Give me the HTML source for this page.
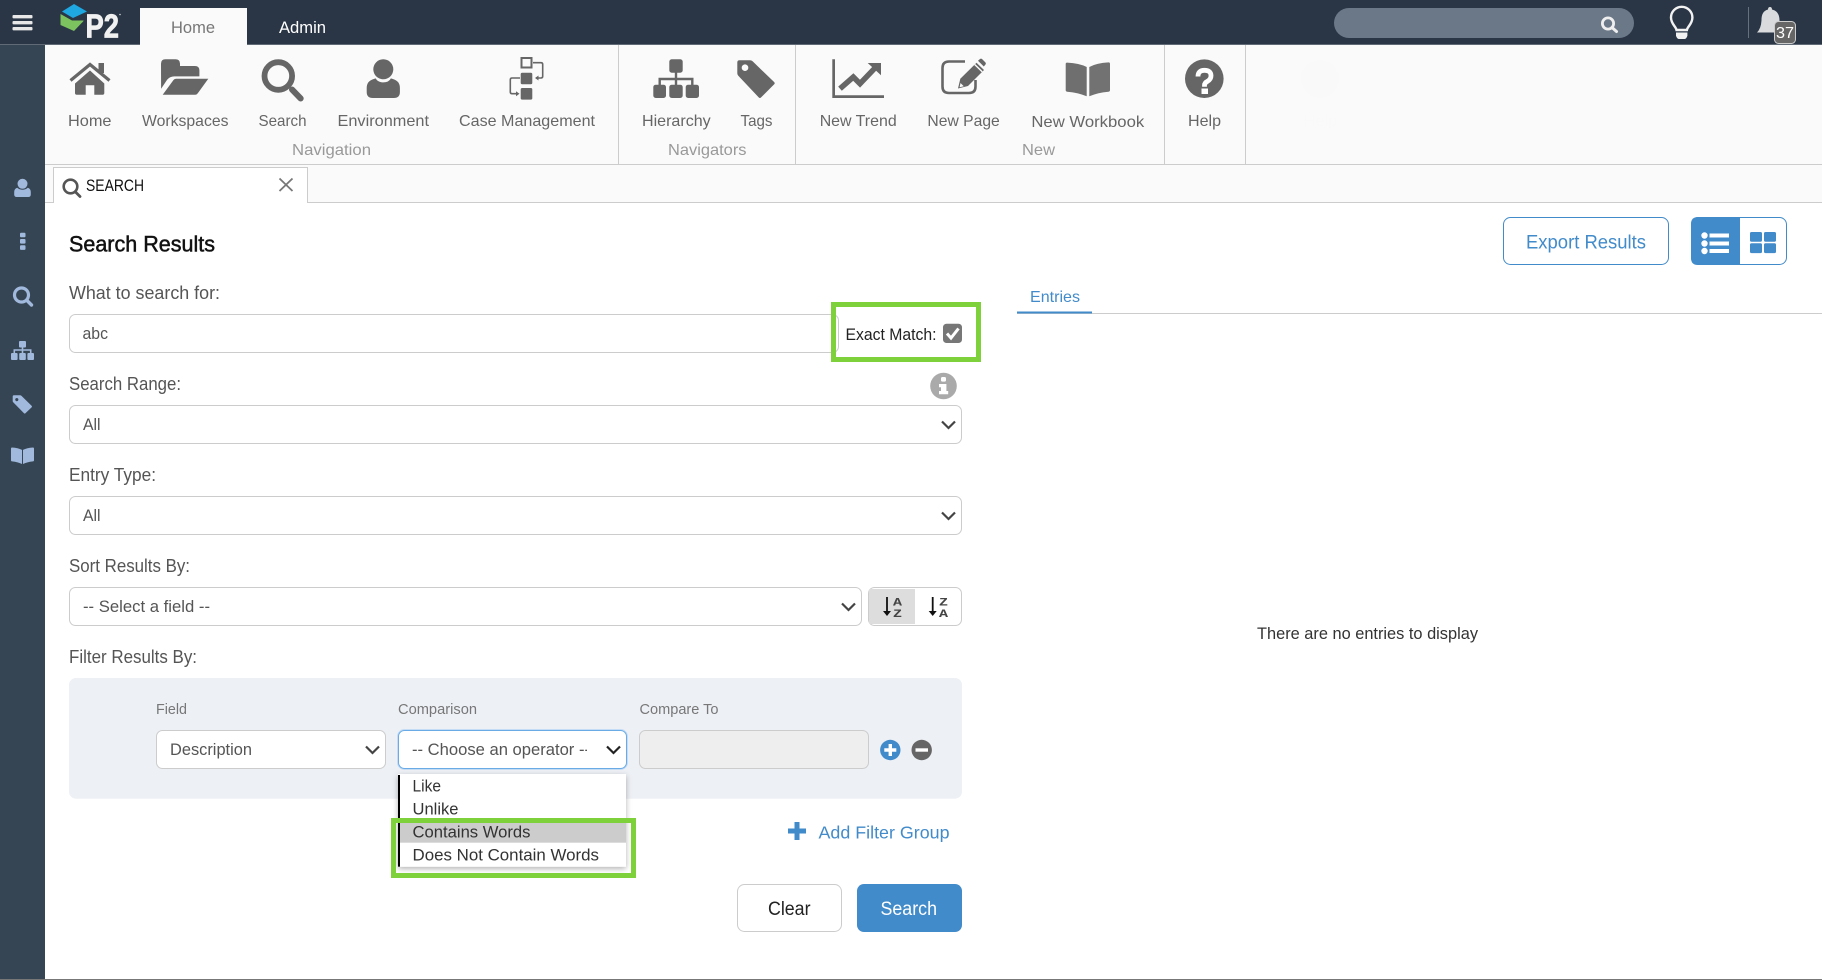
<!DOCTYPE html>
<html lang="en">
<head>
<meta charset="utf-8">
<title>P2 Search Results</title>
<style>
html,body{margin:0;padding:0;background:#fff;width:1822px;height:980px;overflow:hidden}
svg{display:block}
text{font-family:"Liberation Sans",sans-serif;white-space:pre}
.rb{font-size:16px;fill:#666}
.gp{font-size:16px;fill:#999}
.lb{font-size:18px;fill:#555}
.ip{font-size:16.5px;fill:#555}
.sm{font-size:15px;fill:#777}
.op{font-size:16.5px;fill:#333}
.box{fill:#fff;stroke:#ccc;stroke-width:1}
.chev{fill:none;stroke:#444;stroke-width:2.2}
.sd{fill:#a0b9dd}
.ic{fill:#666}
</style>
</head>
<body>
<svg xmlns="http://www.w3.org/2000/svg" width="1822" height="980" viewBox="0 0 1822 980">
<defs>
<filter id="sh" x="-10%" y="-10%" width="120%" height="125%"><feDropShadow dx="0" dy="2" stdDeviation="3" flood-color="#000" flood-opacity=".3"/></filter>
<clipPath id="opc"><rect x="405" y="735" width="182" height="30"/></clipPath>
</defs>

<!-- page -->
<rect width="1822" height="980" fill="#fff"/>
<rect x="0" y="979" width="1822" height="1" fill="#777"/>

<!-- top bar -->
<rect width="1822" height="44" fill="#2a3646"/>
<rect y="44" width="1822" height="1" fill="#5f6a76"/>
<rect x="0" y="45" width="45" height="934" fill="#364553"/>

<!-- hamburger -->
<g fill="#e8e8e8"><rect x="12.5" y="15" width="20" height="3.4" rx="1"/><rect x="12.5" y="21" width="20" height="3.4" rx="1"/><rect x="12.5" y="27" width="20" height="3.4" rx="1"/></g>

<!-- logo -->
<path d="M74 4 L87 11.5 L73 18 L62 11.5 Z" fill="#1ea7e1"/>
<path d="M60.5 14 L72 20.5 L84 20.5 L74 31 L60.5 25 Z" fill="#7cc25e"/>
<path d="M77 16.5 L87 12.5 L87 23 Z" fill="#2a3646"/>
<text x="85.5" y="37.5" style="font-size:33px;font-weight:bold;fill:#f1f1f1;stroke:#f1f1f1;stroke-width:.8" textLength="33.5" lengthAdjust="spacingAndGlyphs">P2</text>
<circle cx="120" cy="14.5" r=".8" fill="#cfd3d8"/>

<!-- main tabs -->
<rect x="140" y="8" width="107" height="37" fill="#fafafa"/>
<text x="171" y="33" style="font-size:17px;fill:#777" textLength="44" lengthAdjust="spacingAndGlyphs">Home</text>
<text x="279" y="33" style="font-size:17px;fill:#fff" textLength="47" lengthAdjust="spacingAndGlyphs">Admin</text>

<!-- top right -->
<rect x="1334" y="8" width="300" height="30" rx="15" fill="#6b7888"/>
<circle cx="1608" cy="23.5" r="5.6" fill="none" stroke="#eee" stroke-width="2.8"/>
<line x1="1612" y1="27.5" x2="1616.5" y2="31.5" stroke="#eee" stroke-width="3" stroke-linecap="round"/>
<path d="M1676.5 30 c-.5-3.5-5.5-6-5.5-12.5 a10.7 10.7 0 0 1 21.4 0 c0 6.5-5 9-5.5 12.5 z" fill="none" stroke="#f2f2f2" stroke-width="2.4"/>
<path d="M1676 32.5 h11.4 v3.2 q-1 3.3-3 3.3 h-5.4 q-2 0-3-3.3 z" fill="#f2f2f2"/>
<rect x="1748" y="7" width="1" height="31" fill="#66717e"/>
<path d="M1770 7 q2 0 2 2.5 c6 1.5 7.5 6 7.5 11 v4 l3 8 H1757 q4-4 4.5-12 c0-6 1.5-9.5 6.5-11 q0-2.5 2-2.5z" fill="#d9dbdd"/>
<rect x="1774.5" y="21.5" width="21" height="22" rx="4" fill="#666" stroke="#ccc"/>
<text x="1776" y="38" style="font-size:16px;fill:#fff" textLength="18" lengthAdjust="spacingAndGlyphs">37</text>

<!-- ribbon -->
<rect x="45" y="45" width="1777" height="119" fill="#fafafa"/>
<rect x="45" y="164" width="1777" height="1" fill="#ccc"/>
<rect x="45" y="165" width="1777" height="37" fill="#fafafa"/>
<rect x="45" y="202" width="1777" height="1" fill="#ccc"/>
<g fill="#ccc"><rect x="618" y="45" width="1" height="119"/><rect x="795" y="45" width="1" height="119"/><rect x="1164" y="45" width="1" height="119"/><rect x="1245" y="45" width="1" height="119"/></g>

<!-- ribbon icons -->
<polyline points="70.5,80.5 90,64.5 109.5,80.5" fill="none" stroke="#666" stroke-width="3.2"/>
<rect x="98.5" y="63" width="5.5" height="10" class="ic"/>
<path class="ic" d="M75 83.5 L90 70.5 L104.3 83.5 V93 q0 1.7-1.7 1.7 H94.3 V85.3 H85.7 V94.7 H76.7 q-1.7 0-1.7-1.7 Z"/>
<path class="ic" d="M161 63.7 q0-4.4 4.4-4.4 h10 q4.6 0 4.6 4.4 v2.3 h15 q4.4 0 4.4 4.4 v6 h-25 q-4.6 0-7.3 3.3 l-6 9 z"/>
<path class="ic" d="M173.5 80 q.8-1.3 2.5-1.3 h32.3 l-10.5 14.5 q-1 1.5-2.6 1.5 h-32.5 z"/>
<circle cx="278.3" cy="76" r="13.8" fill="none" stroke="#666" stroke-width="5.8"/>
<line x1="292" y1="89.5" x2="300.7" y2="98.5" stroke="#666" stroke-width="6" stroke-linecap="round"/>
<circle class="ic" cx="383.3" cy="69.3" r="10"/>
<path class="ic" d="M366.7 92 V88 q0-7 7-9 l2-.6 q2 4 7.6 4 t7.6-4 l2 .6 q7 2 7 9 V92 q0 6-6 6 H372.7 q-6 0-6-6 z"/>
<rect x="521.5" y="58" width="10" height="9.5" fill="none" stroke="#666" stroke-width="2"/>
<rect class="ic" x="520.7" y="72.7" width="11.6" height="11.6" rx="1.5"/>
<rect class="ic" x="520.7" y="88" width="11.6" height="11.6" rx="1.5"/>
<path d="M533 62.7 h8 q1.7 0 1.7 1.7 V76.3 q0 1.7-1.7 1.7 h-5" fill="none" stroke="#666" stroke-width="1.6"/>
<path class="ic" d="M538.5 75.5 v5 l-3.5-2.5z"/>
<path d="M520 78 h-8 q-1.7 0-1.7 1.7 V92 q0 1.7 1.7 1.7 h5" fill="none" stroke="#666" stroke-width="1.6"/>
<path class="ic" d="M516 91.2 v5 l3.5-2.5z"/>

<rect class="ic" x="669.3" y="59.3" width="13.4" height="13.4" rx="2.5"/>
<rect class="ic" x="653.3" y="84.7" width="12.7" height="13.3" rx="2.5"/>
<rect class="ic" x="669.3" y="84.7" width="13.4" height="13.3" rx="2.5"/>
<rect class="ic" x="685.7" y="84.7" width="13.3" height="13.3" rx="2.5"/>
<path d="M676 72 V85 M659.7 85 V79 H692.3 V85" fill="none" stroke="#666" stroke-width="2.4"/>
<path class="ic" fill-rule="evenodd" d="M737.3 62.5 q0-2.2 2.2-2.2 h10.5 q1.5 0 2.6 1 l21.5 20.7 q1.2 1.2 0 2.4 l-13 13 q-1.2 1.2-2.4 0 l-20.4-21.7 q-1-1-1-2.5z M745 64.4 a3.3 3.3 0 1 0 .01 0z"/>
<path class="ic" d="M832.3 59.3 h2.7 V95.3 H884 V98 H832.3z"/>
<polyline points="840,88.7 853.3,77 860,83.7 875,68" fill="none" stroke="#666" stroke-width="5.5"/>
<path class="ic" d="M867.7 63 H881 V75.3z"/>
<path d="M965 61.5 H949 q-6.5 0-6.5 6.5 V86.5 q0 6.5 6.5 6.5 H969 q6.5 0 6.5-6.5 V80" fill="none" stroke="#666" stroke-width="2.6"/>
<path class="ic" d="M958 88.5 L960.3 78.8 L976.5 62.8 L984 70 L968 86z"/>
<path d="M974.7 64.5 L982.2 71.8" stroke="#fafafa" stroke-width="1.4"/>
<path d="M978 60.7 L980 59 q1-.8 2 0 L985.5 62.5 q.8 1 0 2 L983.8 66.5z" class="ic"/>
<path d="M960.5 83 L963.8 86.3 L959.6 87.3z" fill="#fafafa"/>
<path d="M1065.7 64 q0-1.5 1.5-1.4 q12 .5 19.5 4.4 V96.3 q-8-3.6-19.5-4.6 q-1.5-.2-1.5-1.6z" fill="#6f6f6f"/>
<path d="M1110 64 q0-1.7-1.5-1.6 q-12 .6-19.2 4.6 V96.3 q8-3.6 19.2-4.6 q1.5-.2 1.5-1.6z" fill="#727272"/>
<circle class="ic" cx="1204.3" cy="78.7" r="19.3"/>
<path d="M1198 76.5 q0-6.2 6.5-6.2 q6.5 0 6.5 5.5 q0 3.5-3.5 5.5 q-3 1.5-3 4 v1.5" fill="none" stroke="#fff" stroke-width="4.8"/>
<rect x="1201.5" y="88.5" width="6.5" height="5.5" fill="#fff"/>
<circle cx="1320" cy="79" r="19" fill="#f9f9f9"/>
<text x="1304" y="126" style="font-size:16px;fill:#f9f9f9" textLength="33" lengthAdjust="spacingAndGlyphs">Help</text>

<!-- ribbon labels -->
<text class="rb" x="68" y="126" textLength="43.5" lengthAdjust="spacingAndGlyphs">Home</text>
<text class="rb" x="142" y="126" textLength="86.5" lengthAdjust="spacingAndGlyphs">Workspaces</text>
<text class="rb" x="258.5" y="126" textLength="48" lengthAdjust="spacingAndGlyphs">Search</text>
<text class="rb" x="337.5" y="126" textLength="91.5" lengthAdjust="spacingAndGlyphs">Environment</text>
<text class="rb" x="459" y="126" textLength="136" lengthAdjust="spacingAndGlyphs">Case Management</text>
<text class="gp" x="292" y="155" textLength="79" lengthAdjust="spacingAndGlyphs">Navigation</text>
<text class="rb" x="642" y="126" textLength="68.7" lengthAdjust="spacingAndGlyphs">Hierarchy</text>
<text class="rb" x="740.5" y="126" textLength="32" lengthAdjust="spacingAndGlyphs">Tags</text>
<text class="gp" x="668" y="155" textLength="78.5" lengthAdjust="spacingAndGlyphs">Navigators</text>
<text class="rb" x="819.7" y="126" textLength="77" lengthAdjust="spacingAndGlyphs">New Trend</text>
<text class="rb" x="927.4" y="126" textLength="72.4" lengthAdjust="spacingAndGlyphs">New Page</text>
<text class="rb" x="1031.4" y="127" textLength="112.8" lengthAdjust="spacingAndGlyphs">New Workbook</text>
<text class="gp" x="1022" y="155" textLength="33" lengthAdjust="spacingAndGlyphs">New</text>
<text class="rb" x="1188" y="126" textLength="33" lengthAdjust="spacingAndGlyphs">Help</text>

<!-- search tab -->
<path d="M53.5 203 V167.5 H307.5 V203" fill="#fff" stroke="#ccc"/>
<rect x="54" y="200" width="253" height="4" fill="#fff"/>
<circle cx="70.5" cy="186.5" r="6.8" fill="none" stroke="#555" stroke-width="2.6"/>
<line x1="75.5" y1="192" x2="80" y2="196.5" stroke="#555" stroke-width="2.8" stroke-linecap="round"/>
<text x="86" y="191" style="font-size:16.5px;fill:#111" textLength="58" lengthAdjust="spacingAndGlyphs">SEARCH</text>
<path d="M279.5 178.5 L292.5 191 M292.5 178.5 L279.5 191" stroke="#777" stroke-width="1.8" fill="none"/>

<!-- sidebar icons -->
<circle class="sd" cx="22.5" cy="183.8" r="5"/>
<path class="sd" d="M14.2 192 q0-3.3 3-4.3 q2.3 2 5.3 2 t5.3-2 q3 1 3 4.3 v2.5 q0 2.5-2.5 2.5 h-11.6 q-2.5 0-2.5-2.5z"/>
<g class="sd"><rect x="20" y="232.7" width="5.5" height="4.6" rx="1"/><rect x="20" y="239" width="5.5" height="4.6" rx="1"/><rect x="20" y="245.3" width="5.5" height="4.6" rx="1"/></g>
<circle cx="21.5" cy="295" r="7" fill="none" stroke="#a0b9dd" stroke-width="3.2"/>
<line x1="27" y1="300.5" x2="31.5" y2="305" stroke="#a0b9dd" stroke-width="3.4" stroke-linecap="round"/>
<g class="sd"><rect x="19" y="341" width="7" height="6.5" rx="1"/><rect x="11" y="353" width="6.6" height="7" rx="1"/><rect x="19.2" y="353" width="6.6" height="7" rx="1"/><rect x="27.4" y="353" width="6.6" height="7" rx="1"/></g>
<path d="M22.5 347 V353 M14.3 353 V350 H30.7 V353" fill="none" stroke="#a0b9dd" stroke-width="1.6"/>
<path class="sd" fill-rule="evenodd" d="M12.7 396.5 q0-1.2 1.2-1.2 h6 q1 0 1.6.6 l10.2 10 q.7.7 0 1.4 l-6.3 6 q-.7.7-1.4 0 l-10.8-11 q-.5-.6-.5-1.2z M16.8 398 a1.6 1.6 0 1 0 .01 0z"/>
<path class="sd" d="M11 448.5 q0-1 1-1 q6 .3 10 2.4 V464 q-4-2-10-2.6 q-1-.1-1-1z"/>
<path class="sd" d="M34 448.5 q0-1-1-1 q-6 .3-10 2.4 V464 q4-2 10-2.6 q1-.1 1-1z"/>

<!-- left form -->
<text x="69" y="251.5" style="font-size:22px;fill:#111;stroke:#111;stroke-width:.5" textLength="146" lengthAdjust="spacingAndGlyphs">Search Results</text>
<text class="lb" x="69" y="299" textLength="151" lengthAdjust="spacingAndGlyphs">What to search for:</text>
<rect class="box" x="69.5" y="314.5" width="769" height="38" rx="6"/>
<text class="ip" x="82.5" y="339" textLength="25.5" lengthAdjust="spacingAndGlyphs">abc</text>
<text x="845.5" y="340" style="font-size:17px;fill:#222" textLength="91" lengthAdjust="spacingAndGlyphs">Exact Match:</text>
<rect x="943" y="323.7" width="19" height="19.3" rx="3.5" fill="#777"/>
<path d="M947 333.5 L951 338 L958.5 328.5" fill="none" stroke="#fff" stroke-width="3"/>
<rect x="833.5" y="304.5" width="145" height="55" fill="none" stroke="#7fd13b" stroke-width="5"/>
<circle cx="943.5" cy="386" r="13.3" fill="#aaa"/>
<rect x="941" y="377" width="5" height="4.6" rx="1.5" fill="#fff"/>
<path d="M939 384 h7.4 v7 h1.8 v3.2 h-9.2 v-3.2 h2 v-3.8 h-2z" fill="#fff"/>

<text class="lb" x="69" y="390" textLength="112" lengthAdjust="spacingAndGlyphs">Search Range:</text>
<rect class="box" x="69.5" y="405.5" width="892" height="38" rx="6"/>
<text class="ip" x="83" y="430" textLength="17.5" lengthAdjust="spacingAndGlyphs">All</text>
<polyline class="chev" points="942,421.5 948.5,428 955,421.5"/>

<text class="lb" x="69" y="481" textLength="87" lengthAdjust="spacingAndGlyphs">Entry Type:</text>
<rect class="box" x="69.5" y="496.5" width="892" height="38" rx="6"/>
<text class="ip" x="83" y="521" textLength="17.5" lengthAdjust="spacingAndGlyphs">All</text>
<polyline class="chev" points="942,512.5 948.5,519 955,512.5"/>

<text class="lb" x="69" y="572" textLength="121" lengthAdjust="spacingAndGlyphs">Sort Results By:</text>
<rect class="box" x="69.5" y="587.5" width="792" height="38" rx="6"/>
<text class="ip" x="83" y="612" textLength="127" lengthAdjust="spacingAndGlyphs">-- Select a field --</text>
<polyline class="chev" points="842,603.5 848.5,610 855,603.5"/>
<rect class="box" x="868.5" y="587.5" width="93" height="38" rx="6"/>
<path d="M870 589 h45 v35 h-45 q-1-0-1-1 v-33 q0-1 1-1z" fill="#ddd"/>
<path d="M887 597 V612" stroke="#111" stroke-width="1.8"/><path d="M883 611 h8 l-4 5z" fill="#111"/>
<text x="893" y="605.5" style="font-family:'Liberation Mono',monospace;font-size:11px;font-weight:bold;fill:#444" textLength="9" lengthAdjust="spacingAndGlyphs">A</text>
<text x="893" y="617" style="font-family:'Liberation Mono',monospace;font-size:11px;font-weight:bold;fill:#444" textLength="9" lengthAdjust="spacingAndGlyphs">Z</text>
<path d="M932.7 597 V612" stroke="#111" stroke-width="1.8"/><path d="M928.7 611 h8 l-4 5z" fill="#111"/>
<text x="939" y="605.5" style="font-family:'Liberation Mono',monospace;font-size:11px;font-weight:bold;fill:#444" textLength="9" lengthAdjust="spacingAndGlyphs">Z</text>
<text x="939" y="617" style="font-family:'Liberation Mono',monospace;font-size:11px;font-weight:bold;fill:#444" textLength="9" lengthAdjust="spacingAndGlyphs">A</text>

<text class="lb" x="69" y="663" textLength="128" lengthAdjust="spacingAndGlyphs">Filter Results By:</text>
<rect x="69" y="678" width="893" height="120.7" rx="7" fill="#edf0f5"/>
<text class="sm" x="156" y="714" textLength="31" lengthAdjust="spacingAndGlyphs">Field</text>
<text class="sm" x="398" y="714" textLength="79" lengthAdjust="spacingAndGlyphs">Comparison</text>
<text class="sm" x="639.5" y="714" textLength="79" lengthAdjust="spacingAndGlyphs">Compare To</text>
<rect class="box" x="156.5" y="730.5" width="229" height="38" rx="6"/>
<text class="ip" x="170" y="755" textLength="82" lengthAdjust="spacingAndGlyphs">Description</text>
<polyline class="chev" points="366,746.5 372.5,753 379,746.5"/>
<rect x="398.5" y="730.5" width="228" height="38" rx="6" fill="#fff" stroke="#a9d0f5" stroke-width="3" opacity=".6"/>
<rect x="398.5" y="730.5" width="228" height="38" rx="6" fill="#fff" stroke="#6aabe6"/>
<g clip-path="url(#opc)"><text class="ip" x="412" y="755" textLength="178" lengthAdjust="spacingAndGlyphs">-- Choose an operator --</text></g>
<polyline class="chev" points="607,746.5 613.5,753 620,746.5" style="stroke:#222"/>
<rect x="639.5" y="730.5" width="229" height="38" rx="6" fill="#eee" stroke="#ccc"/>
<circle cx="890.3" cy="750" r="10.2" fill="#428bca"/>
<path d="M890.3 744 V756 M884.3 750 H896.3" stroke="#fff" stroke-width="3.4"/>
<circle cx="921.7" cy="750" r="10.2" fill="#666"/>
<path d="M915.5 750 H928" stroke="#fff" stroke-width="3.4"/>

<!-- dropdown -->
<rect x="398" y="774" width="228" height="92.7" fill="#fff" filter="url(#sh)"/>
<rect x="398" y="775" width="2" height="91.7" fill="#000"/>
<rect x="400" y="823" width="226" height="19.7" fill="#ccc"/>
<text class="op" x="412.5" y="791.7" textLength="28.5" lengthAdjust="spacingAndGlyphs">Like</text>
<text class="op" x="412.5" y="814.3" textLength="46" lengthAdjust="spacingAndGlyphs">Unlike</text>
<text class="op" x="412.5" y="837.5" textLength="118" lengthAdjust="spacingAndGlyphs">Contains Words</text>
<text class="op" x="412.5" y="860.3" textLength="186.5" lengthAdjust="spacingAndGlyphs">Does Not Contain Words</text>
<rect x="393.5" y="820.5" width="240" height="55" fill="none" stroke="#7fd13b" stroke-width="5"/>

<!-- add filter group -->
<path d="M797 822 V840 M788 831 H806" stroke="#428bca" stroke-width="5"/>
<text x="818.5" y="838.3" style="font-size:17.5px;fill:#428bca" textLength="131" lengthAdjust="spacingAndGlyphs">Add Filter Group</text>

<!-- actions -->
<rect class="box" x="737.5" y="884.5" width="104" height="47" rx="7"/>
<text x="768" y="915" style="font-size:19px;fill:#222" textLength="42.5" lengthAdjust="spacingAndGlyphs">Clear</text>
<rect x="857" y="884" width="105" height="48" rx="7" fill="#428bca"/>
<text x="880.5" y="915" style="font-size:19px;fill:#fff" textLength="56.5" lengthAdjust="spacingAndGlyphs">Search</text>

<!-- right pane -->
<rect x="1503.5" y="217.5" width="165" height="47" rx="7" fill="#fff" stroke="#428bca"/>
<text x="1526" y="248.5" style="font-size:19px;fill:#428bca" textLength="120" lengthAdjust="spacingAndGlyphs">Export Results</text>
<rect x="1691.5" y="217.5" width="95" height="47" rx="7" fill="#fff" stroke="#428bca"/>
<path d="M1698 217 H1740 V265 H1698 q-7 0-7-7 V224 q0-7 7-7z" fill="#428bca"/>
<g fill="#fff"><circle cx="1704.5" cy="235.5" r="3.2"/><circle cx="1704.5" cy="243.5" r="3.2"/><circle cx="1704.5" cy="251" r="3.2"/><rect x="1709.5" y="233.5" width="19.5" height="4"/><rect x="1709.5" y="241.5" width="19.5" height="4"/><rect x="1709.5" y="249" width="19.5" height="4"/></g>
<g fill="#428bca"><rect x="1750" y="232" width="12" height="9.8" rx="1.5"/><rect x="1764" y="232" width="12" height="9.8" rx="1.5"/><rect x="1750" y="243.3" width="12" height="9.8" rx="1.5"/><rect x="1764" y="243.3" width="12" height="9.8" rx="1.5"/></g>

<rect x="1017" y="313" width="805" height="1" fill="#ccc"/>
<rect x="1017" y="311.5" width="75" height="2" fill="#428bca"/>
<text x="1030" y="302" style="font-size:16px;fill:#428bca" textLength="50" lengthAdjust="spacingAndGlyphs">Entries</text>
<text x="1257" y="639" style="font-size:16.5px;fill:#333" textLength="221" lengthAdjust="spacingAndGlyphs">There are no entries to display</text>
</svg>
</body>
</html>
